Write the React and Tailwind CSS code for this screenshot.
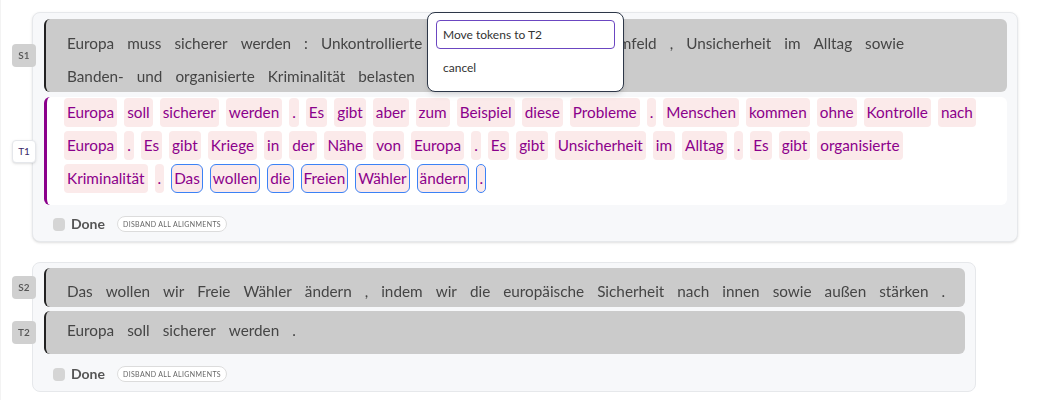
import React from 'react'

const S1 = 'Europa muss sicherer werden : Unkontrollierte Migration , Krieg im Umfeld , Unsicherheit im Alltag sowie Banden- und organisierte Kriminalität belasten die Menschen .'
const T1 = 'Europa soll sicherer werden . Es gibt aber zum Beispiel diese Probleme . Menschen kommen ohne Kontrolle nach Europa . Es gibt Kriege in der Nähe von Europa . Es gibt Unsicherheit im Alltag . Es gibt organisierte Kriminalität .'
const T1_SELECTED = 'Das wollen die Freien Wähler ändern .'
const S2 = 'Das wollen wir Freie Wähler ändern , indem wir die europäische Sicherheit nach innen sowie außen stärken .'
const T2 = 'Europa soll sicherer werden .'

const font = { fontFamily: 'Lato, "Open Sans", sans-serif' }

function Label({ name, active }) {
  return (
    <div
      className={
        'w-[24px] h-[23px] shrink-0 -ml-[32px] mr-[8px] rounded flex items-center justify-center text-[10px] ' +
        (active
          ? 'bg-white border border-gray-200 shadow-sm text-[#3b2a6b]'
          : 'bg-[#d0d0d0] text-[#555] font-semibold blur-[0.7px]')
      }
    >
      {name}
    </div>
  )
}

function GrayBlock({ text, className }) {
  return (
    <div className={'flex-1 bg-[#cbcbcb] border-l-2 border-[#222] rounded-md pl-[18px] ' + className}>
      <div className="flex flex-wrap gap-x-[7px] gap-y-[4px] text-[#454545] blur-[0.6px]">
        {text.split(' ').map((w, i) => (
          <span key={i} className="px-[3px] h-[29px] leading-[29px] text-[15.3px]">
            {w}
          </span>
        ))}
      </div>
    </div>
  )
}

function DoneRow() {
  return (
    <div className="flex items-center h-[16px] gap-[6px] pl-[9px] blur-[0.7px]">
      <span className="w-[12px] h-[13px] rounded-sm bg-[#d5d5d5]" />
      <span className="text-[14px] leading-[16px] font-bold text-[#555]">Done</span>
      <span className="ml-[6px] h-[16px] px-[5px] flex items-center rounded-lg border border-[#dcdcdc] bg-white text-[7px] tracking-[0.05em] text-[#666]">
        DISBAND ALL ALIGNMENTS
      </span>
    </div>
  )
}

export default function App() {
  return (
    <div className="relative w-[1047px] h-[400px] bg-white border-l border-[#f3f3f3] overflow-hidden" style={font}>
      <div className="pt-[12px] flex flex-col gap-[20px]">
        <div className="ml-[31px] w-[986px] bg-[#f7f8fa] border border-[#e6e8eb] rounded-lg shadow-sm pl-[11px] pr-[10px] pt-[6px] pb-[9px]">
          <div className="flex items-center">
            <Label name="S1" />
            <GrayBlock text={S1} className="pr-[40px] pt-[10px] pb-[1px]" />
          </div>
          <div className="flex items-center mt-[5px]">
            <Label name="T1" active />
            <div className="flex-1 bg-white border-l-[3px] border-[#8b008b] rounded-md pl-[17px] pr-[20px] pt-[1px] pb-[12px]">
              <div className="flex flex-wrap gap-x-[7px] gap-y-[4px]">
                {T1.split(' ').map((w, i) => (
                  <span key={i} className="px-[3px] h-[29px] leading-[29px] text-[15.3px] rounded bg-[#fbeaea] text-[#8b008b]">
                    {w}
                  </span>
                ))}
                {T1_SELECTED.split(' ').map((w, i) => (
                  <span key={'s' + i} className="px-[2px] h-[29px] leading-[27px] text-[15.3px] rounded-md border border-[#3b82f6] bg-[#fbeaea] text-[#8b008b]">
                    {w}
                  </span>
                ))}
              </div>
            </div>
          </div>
          <div className="mt-[11px]">
            <DoneRow />
          </div>
        </div>

        <div className="ml-[31px] w-[944px] bg-[#f7f8fa] border border-[#e6e8eb] rounded-lg pl-[11px] pr-[10px] pt-[5px] pb-[9px]">
          <div className="flex items-center">
            <Label name="S2" />
            <GrayBlock text={S2} className="pr-2 pt-[9px] pb-[1px]" />
          </div>
          <div className="flex items-center mt-[4px]">
            <Label name="T2" />
            <GrayBlock text={T2} className="pr-2 pt-[5px] pb-[9px]" />
          </div>
          <div className="mt-[12px]">
            <DoneRow />
          </div>
        </div>
      </div>

      <div className="absolute left-[426px] top-[12px] w-[197px] h-[80px] bg-white border border-[#2d3748] rounded-lg shadow-md px-[8px] pt-[7px]">
        <div className="h-[29px] border border-[#6b46c1] rounded-sm px-[6px] flex items-center text-[12px] text-[#333]">
          Move tokens to T2
        </div>
        <div className="mt-[10px] pl-[7px] text-[12px] text-[#333]">cancel</div>
      </div>
    </div>
  )
}
